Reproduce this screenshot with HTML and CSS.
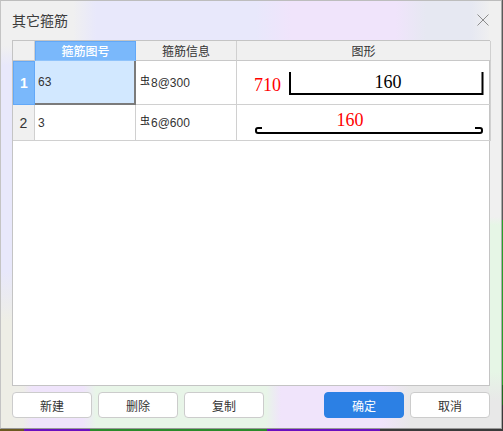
FILE: index.html
```html
<!DOCTYPE html>
<html lang="zh">
<head>
<meta charset="utf-8">
<title>其它箍筋</title>
<link rel="stylesheet" href="styles.css">
</head>
<body>
<div class="window">
  <div class="wash"></div>
  <header class="titlebar">
    <span class="title">其它箍筋</span>
    <svg class="close" width="12" height="12" viewBox="0 0 12 12"><path d="M.5.5l11 11M11.500.5l-11 11" stroke="#8c8c8c" stroke-width="1" fill="none"/></svg>
  </header>
  <div class="table">
    <div class="grid">
      <div class="head corner"></div>
      <div class="head active">箍筋图号</div>
      <div class="head">箍筋信息</div>
      <div class="head">图形</div>

      <div class="rownum active">1</div>
      <div class="cell selected">63</div>
      <div class="cell info"><span class="grade">虫</span>8@300</div>
      <div class="cell figure">
        <svg class="shape" width="253" height="43" viewBox="0 0 253 43">
          <text class="num red" x="30.500" y="30">710</text>
          <path d="M53 11V33H245.500V11" fill="none" stroke="#000" stroke-width="2"/>
          <text class="num" x="151" y="27">160</text>
        </svg>
      </div>

      <div class="rownum">2</div>
      <div class="cell">3</div>
      <div class="cell info"><span class="grade">虫</span>6@600</div>
      <div class="cell figure">
        <svg class="shape" width="253" height="35" viewBox="0 0 253 35">
          <text class="num red" x="113" y="21">160</text>
          <path d="M25 23H21Q19 23 19 25V26Q19 28 21 28H243Q245 28 245 26V25Q245 23 243 23H238" fill="none" stroke="#000" stroke-width="2"/>
        </svg>
      </div>
    </div>
  </div>
  <footer class="actions">
    <button class="btn">新建</button>
    <button class="btn">删除</button>
    <button class="btn">复制</button>
    <span class="spacer"></span>
    <button class="btn primary">确定</button>
    <button class="btn">取消</button>
  </footer>
</div>
</body>
</html>
```
FILE: styles.css
```css
* { box-sizing: border-box; }
html, body { margin: 0; height: 100%; }
body {
  width: 503px;
  height: 431px;
  overflow: hidden;
  font-family: "Noto Sans CJK SC", "Liberation Sans", sans-serif;
  background:
    linear-gradient(to right, #6b5a20 0 24px, #6a10c0 24px 90px, #2a8a2a 90px 267px, #6a10c0 267px 380px, #3a3a3a 380px 503px) bottom / 100% 2px no-repeat,
    linear-gradient(to bottom, #5a5a5a 0 220px, #2aa02a 220px 385px, #1f6a1f 385px 405px, #3a3a3a 405px) right / 1px 100% no-repeat,
    #f0f0f0;
}
.window {
  position: relative;
  width: 502px;
  height: 429px;
  border-top: 1px solid #bdbdbd;
  border-left: 1px solid #c4c4c4;
  border-right: 1px solid #aaa;
  border-bottom: 1px solid #999;
  padding: 0 11px 10px 11px;
  display: flex;
  flex-direction: column;
  color: #333;
}
.wash {
  position: absolute;
  inset: 0;
  pointer-events: none;
  background:
    linear-gradient(to bottom, #f0f0f0 0 45px, #e8e8fb 65px 270px, #eeeee6 320px) left / 12px 100% no-repeat,
    linear-gradient(to bottom, #f0f0f0 0 216px, #e6f6e6 224px 370px, #e8e8e8 400px) right / 12px 100% no-repeat,
    linear-gradient(to right, #eeeee8 0 22px, #efe4fb 32px 82px, #e8f5e8 95px 265px, #f0e4fb 280px 380px, #e8e8e8 410px) bottom / 100% 43px no-repeat,
    linear-gradient(to right, #f0f0f0 0 72px, #e8e8fb 95px 255px, #f0e4fb 290px 395px, #e6e8f2 425px 470px, #f0f0f0 490px) top / 100% 40px no-repeat,
    #f0f0f0;
}
.titlebar {
  position: relative;
  height: 39px;
  flex: none;
  display: flex;
  align-items: center;
  justify-content: space-between;
}
.title { font-size: 14px; color: #3c3c3c; margin-bottom: 1px; }
.close { margin: 0 1px 2px 0; }
.table {
  position: relative;
  flex: 1;
  background: #fff;
  border: 1px solid #c4c4c4;
  min-height: 0;
}
.grid {
  display: grid;
  grid-template-columns: 22px 101px 101px 1fr;
  grid-template-rows: 20px 44px 36px;
}
.head {
  background: #f0f0f0;
  border-right: 1px solid #d0d0d0;
  border-bottom: 1px solid #c8c8c8;
  font-size: 12px;
  line-height: 19px;
  text-align: center;
  color: #333;
}
.head:last-child, .figure { border-right: 0; }
.head.active {
  background: #7ab8fb;
  color: #fff;
  border: 1px solid #62a8f8;
  border-bottom: 1px solid #8fc3fb;
  font-weight: 500;
  line-height: 18px;
}
.rownum {
  background: #f0f0f0;
  border-right: 1px solid #d0d0d0;
  border-bottom: 1px solid #d0d0d0;
  font-size: 14px;
  display: flex;
  align-items: center;
  justify-content: center;
  font-family: "Liberation Sans", sans-serif;
}
.rownum.active {
  background: #7ab8fb;
  color: #fff;
  font-weight: 700;
  border: 1px solid #62a8f8;
}
.cell {
  border-right: 1px solid #d0d0d0;
  border-bottom: 1px solid #d0d0d0;
  font-family: "Liberation Sans", sans-serif;
  font-size: 12px;
  color: #333;
  display: flex;
  align-items: center;
  padding-left: 3px;
}
.cell.selected {
  background: #d2e8ff;
  border-right: 2px solid #7b7b7b;
  border-bottom: 2px solid #7b7b7b;
}
.info { padding-left: 4px; }
.grade { font-size: 10px; font-family: "Noto Sans CJK SC", sans-serif; margin: -7px 1px 0 0; color: #222; }
.figure { padding: 0; }
.shape { display: block; }
.num { font-family: "Liberation Serif", serif; font-size: 18px; text-anchor: middle; fill: #000; }
.red { fill: #f00; }
.actions {
  position: relative;
  display: flex;
  gap: 6px;
  padding-top: 6px;
  flex: none;
}
.spacer { width: 48px; }
.btn {
  width: 80px;
  height: 26px;
  padding: 0;
  background: #fff;
  border: 1px solid #ccc;
  border-radius: 4px;
  font: 12px "Noto Sans CJK SC", sans-serif;
  color: #333;
}
.btn.primary { background: #2c80e4; border-color: #2c80e4; color: #fff; }
```
